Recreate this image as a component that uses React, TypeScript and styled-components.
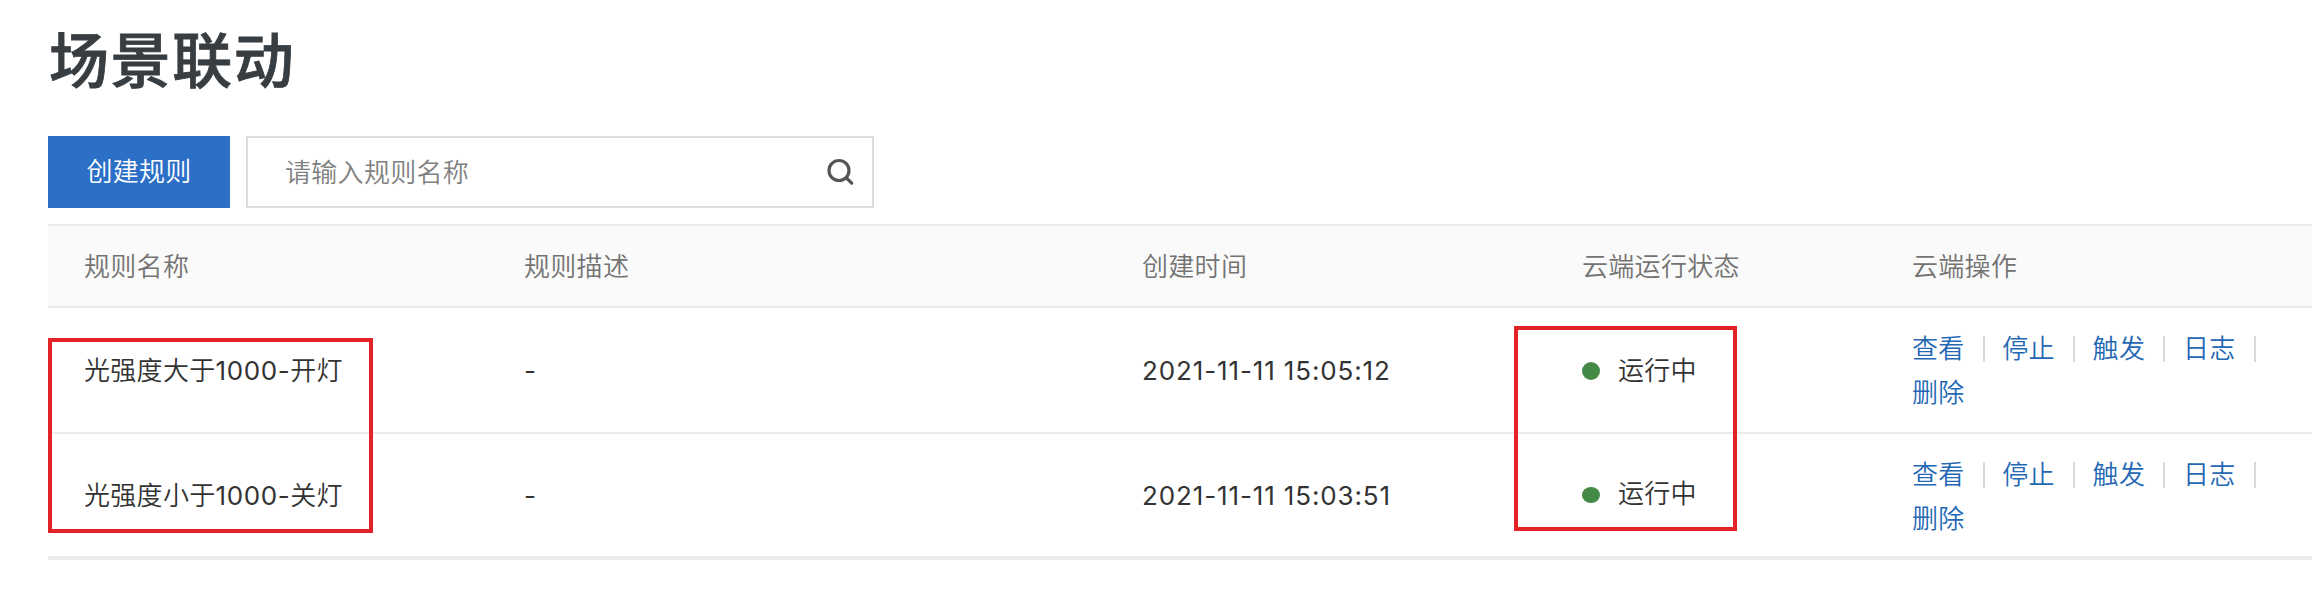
import React from "react";
import styled, { createGlobalStyle } from "styled-components";

const GlobalStyle = createGlobalStyle`
  * { box-sizing: border-box; }
  body {
    margin: 0;
    background: #fff;
    color: #333;
    font-family: Inter, "Noto Sans CJK SC", sans-serif;
    font-size: 26px;
    font-weight: 350;
    overflow: hidden;
  }
`;

const Page = styled.main`
  position: relative;
  height: 602px;
  padding: 16px 0 0 48px;
`;

const Title = styled.h1`
  margin: 0;
  height: 88px;
  padding-left: 1px;
  line-height: 90px;
  font-size: 60px;
  font-weight: 500;
  -webkit-text-stroke: 0.8px #373d41;
  letter-spacing: 1.6px;
  color: #373d41;
`;

const Toolbar = styled.div`
  display: flex;
  gap: 16px;
  height: 72px;
  margin: 32px 0 16px;
`;

const CreateButton = styled.button`
  width: 182px;
  padding: 0 0 6px;
  border: 0;
  background: #2c6fc6;
  color: #fff;
  font: inherit;
  letter-spacing: 0.3px;
`;

const SearchBox = styled.label`
  display: flex;
  align-items: center;
  width: 628px;
  padding: 0 18px 0 37px;
  border: 2px solid #dedede;
`;

const SearchInput = styled.input`
  flex: 1;
  min-width: 0;
  padding: 0;
  border: 0;
  outline: 0;
  background: none;
  font: inherit;
  letter-spacing: 0.3px;
  &::placeholder { color: #808080; opacity: 1; }
`;

const Table = styled.div`
  border-top: 2px solid #ebebeb;
  border-bottom: 4px solid #ebebeb;
`;

const Row = styled.div<{ $head?: boolean }>`
  display: grid;
  grid-template-columns: 440px 618px 440px 330px 1fr;
  align-items: center;
  height: ${(p) => (p.$head ? 82 : 126)}px;
  background: ${(p) => (p.$head ? "#fafafa" : "transparent")};
  color: ${(p) => (p.$head ? "#737373" : "#333")};
  border-bottom: 2px solid #ebebeb;
  &:last-child { height: 122px; border-bottom: 0; }
`;

const Cell = styled.div`
  padding: 2px 0 0 36px;
  line-height: 44px;
  letter-spacing: 0.3px;
  white-space: nowrap;
`;

const Digits = styled.span<{ $spacing: number }>`
  font-weight: 400;
  letter-spacing: ${(p) => p.$spacing}px;
`;

const Status = styled.span`
  display: flex;
  align-items: center;
  gap: 18px;
  ${Row}:last-child & { margin-top: -4px; }
`;

const Dot = styled.i`
  width: 18px;
  height: 18px;
  border-radius: 50%;
  background: #448a46;
  ${Row}:last-child & { height: 16px; margin-top: 2px; }
`;

const Actions = styled.div`
  display: flex;
  flex-wrap: wrap;
  width: 380px;
  ${Row}:last-child & { padding-top: 2px; }
`;

const Action = styled.a`
  display: flex;
  align-items: center;
  color: #2468b4;
  &:not(:last-child)::after {
    content: "";
    width: 2px;
    height: 26px;
    margin: 0 17.7px 0 18px;
    background: #d9d9d9;
  }
`;

const Highlight = styled.div<{ $x: number; $y: number; $w: number; $h: number }>`
  position: absolute;
  left: ${(p) => p.$x}px;
  top: ${(p) => p.$y}px;
  width: ${(p) => p.$w}px;
  height: ${(p) => p.$h}px;
  border: 4px solid #e32228;
  pointer-events: none;
`;

const headers = ["规则名称", "规则描述", "创建时间", "云端运行状态", "云端操作"];
const actions = ["查看", "停止", "触发", "日志", "删除"];
const rules = [
  { subject: "光强度大于", threshold: "1000-", effect: "开灯", created: "2021-11-11 15:05:12" },
  { subject: "光强度小于", threshold: "1000-", effect: "关灯", created: "2021-11-11 15:03:51" },
];

export default function App() {
  return (
    <Page>
      <GlobalStyle />
      <Title>场景联动</Title>
      <Toolbar>
        <CreateButton>创建规则</CreateButton>
        <SearchBox>
          <SearchInput placeholder="请输入规则名称" />
          <svg width="28" height="28" viewBox="0 0 28 28" fill="none" stroke="#555" strokeWidth="3.2" strokeLinecap="round">
            <circle cx="13" cy="12.5" r="10" />
            <path d="M20.5 20l5.2 5.2" />
          </svg>
        </SearchBox>
      </Toolbar>
      <Table>
        <Row $head>
          {headers.map((h) => (
            <Cell key={h}>{h}</Cell>
          ))}
        </Row>
        {rules.map((r) => (
          <Row key={r.created}>
            <Cell>
              {r.subject}
              <Digits $spacing={0.6}>{r.threshold}</Digits>
              {r.effect}
            </Cell>
            <Cell>
              <Digits $spacing={0}>-</Digits>
            </Cell>
            <Cell>
              <Digits $spacing={0.87}>{r.created}</Digits>
            </Cell>
            <Cell>
              <Status>
                <Dot />
                运行中
              </Status>
            </Cell>
            <Cell>
              <Actions>
                {actions.map((a) => (
                  <Action key={a}>{a}</Action>
                ))}
              </Actions>
            </Cell>
          </Row>
        ))}
      </Table>
      <Highlight $x={48} $y={338} $w={325} $h={195} />
      <Highlight $x={1514} $y={326} $w={223} $h={205} />
    </Page>
  );
}
